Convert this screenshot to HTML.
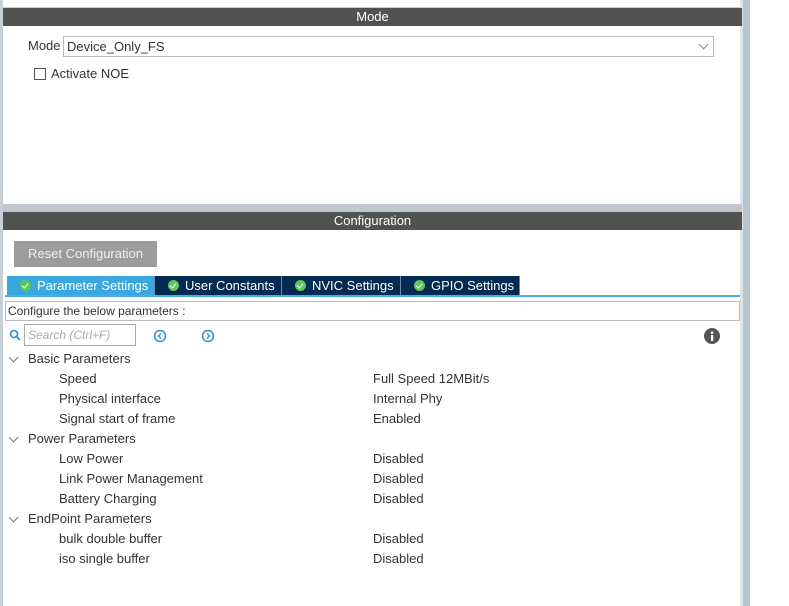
<!DOCTYPE html>
<html><head><style>
*{margin:0;padding:0;box-sizing:border-box}
body{width:789px;height:606px;background:#fff;position:relative;overflow:hidden;font-family:"Liberation Sans",Arial,sans-serif;font-size:13px;color:#333}
.a{position:absolute}
.bar{background:#505250;color:#fff;text-align:center;font-size:13px;line-height:18px}
.tab{position:absolute;top:276px;height:20px;background:#032a50;color:#fff;line-height:20px;font-size:13px;padding-left:13px;border-right:1px solid #6a88a8;white-space:nowrap}
.ck{position:absolute;left:0;top:4px;width:11px;height:11px;border-radius:50%;background:#5cc85c}
.ck::after{content:"";position:absolute;left:3px;top:2px;width:3px;height:5px;border-right:1.5px solid #fff;border-bottom:1.5px solid #fff;transform:rotate(40deg)}
.tab .ck{left:13px}
.tab span.t{margin-left:17px}
.r{position:absolute;left:0;height:20px;line-height:20px;font-size:13px;color:#333}
.v{position:absolute;left:373px;height:20px;line-height:20px;color:#333}
.chev{position:absolute;left:10px;width:7px;height:7px;border-right:1px solid #777;border-bottom:1px solid #777;transform:rotate(45deg)}
</style></head><body>
<div class="a" style="left:0;top:0;width:3px;height:606px;background:#c8d0d6"></div>
<div class="a" style="left:743px;top:0;width:7px;height:606px;background:#b8c4cc"></div>
<div class="a" style="left:740px;top:0;width:3px;height:606px;background:#dde3e7"></div>
<div class="a" style="left:3px;top:0;width:737px;height:8px;background:#fff;border-bottom:1px solid #ccc"></div>
<div class="a bar" style="left:3px;top:8px;width:739px;height:18px">Mode</div>
<div class="a" style="left:28px;top:36px;line-height:20px">Mode</div>
<div class="a" style="left:63px;top:36px;width:651px;height:21px;border:1px solid #bbb;padding-left:3px;line-height:19px">Device_Only_FS</div>
<div class="a" style="left:700px;top:41px;width:7px;height:7px;border-right:1px solid #888;border-bottom:1px solid #888;transform:rotate(45deg)"></div>
<div class="a" style="left:34px;top:68px;width:12px;height:12px;border:1px solid #555"></div>
<div class="a" style="left:51px;top:64px;line-height:20px">Activate NOE</div>
<div class="a" style="left:3px;top:204px;width:739px;height:8px;background:#c0c8ce"></div>
<div class="a bar" style="left:3px;top:212px;width:739px;height:18px">Configuration</div>
<div class="a" style="left:14px;top:241px;width:143px;height:26px;background:#9a9c9e;color:#eee;text-align:center;line-height:26px">Reset Configuration</div>
<div class="tab" style="left:7px;width:148px;background:#3aa8e0"><i class="ck"></i><span class="t">Parameter Settings</span></div>
<div class="tab" style="left:155px;width:127px"><i class="ck"></i><span class="t">User Constants</span></div>
<div class="tab" style="left:282px;width:119px"><i class="ck"></i><span class="t">NVIC Settings</span></div>
<div class="tab" style="left:401px;width:119px"><i class="ck"></i><span class="t">GPIO Settings</span></div>
<div class="a" style="left:5px;top:295px;width:735px;height:2px;background:#4ab0e4"></div>
<div class="a" style="left:5px;top:301px;width:735px;height:20px;border:1px solid #bbb;line-height:18px;padding-left:2px;font-size:12px">Configure the below parameters :</div>
<svg class="a" style="left:9px;top:329px" width="12" height="12"><circle cx="5" cy="5" r="3.5" fill="none" stroke="#2a90d0" stroke-width="1.6"/><line x1="7.5" y1="7.5" x2="11" y2="11" stroke="#2a90d0" stroke-width="1.8"/></svg>
<div class="a" style="left:24px;top:324px;width:112px;height:22px;border:1px solid #aaa;color:#aaa;font-style:italic;line-height:20px;padding-left:3px;font-size:12px">Search (Ctrl+F)</div>
<svg class="a" style="left:153px;top:329px" width="14" height="14"><circle cx="7" cy="7" r="5.5" fill="none" stroke="#2a90d0" stroke-width="1.5"/><path d="M8 4.5 L5.5 7 L8 9.5" fill="none" stroke="#2a90d0" stroke-width="1.4"/></svg>
<svg class="a" style="left:201px;top:329px" width="14" height="14"><circle cx="7" cy="7" r="5.5" fill="none" stroke="#2a90d0" stroke-width="1.5"/><path d="M6 4.5 L8.5 7 L6 9.5" fill="none" stroke="#2a90d0" stroke-width="1.4"/></svg>
<svg class="a" style="left:704px;top:328px" width="16" height="16"><circle cx="8" cy="8" r="8" fill="#555"/><rect x="7" y="7" width="2.2" height="6" fill="#fff"/><circle cx="8.1" cy="4.6" r="1.3" fill="#fff"/></svg>

<div class="chev" style="top:354px"></div><div class="r" style="left:28px;top:349px">Basic Parameters</div>
<div class="r" style="left:59px;top:369px">Speed</div><div class="v" style="top:369px">Full Speed 12MBit/s</div>
<div class="r" style="left:59px;top:389px">Physical interface</div><div class="v" style="top:389px">Internal Phy</div>
<div class="r" style="left:59px;top:409px">Signal start of frame</div><div class="v" style="top:409px">Enabled</div>
<div class="chev" style="top:434px"></div><div class="r" style="left:28px;top:429px">Power Parameters</div>
<div class="r" style="left:59px;top:449px">Low Power</div><div class="v" style="top:449px">Disabled</div>
<div class="r" style="left:59px;top:469px">Link Power Management</div><div class="v" style="top:469px">Disabled</div>
<div class="r" style="left:59px;top:489px">Battery Charging</div><div class="v" style="top:489px">Disabled</div>
<div class="chev" style="top:514px"></div><div class="r" style="left:28px;top:509px">EndPoint Parameters</div>
<div class="r" style="left:59px;top:529px">bulk double buffer</div><div class="v" style="top:529px">Disabled</div>
<div class="r" style="left:59px;top:549px">iso single buffer</div><div class="v" style="top:549px">Disabled</div>
</body></html>
